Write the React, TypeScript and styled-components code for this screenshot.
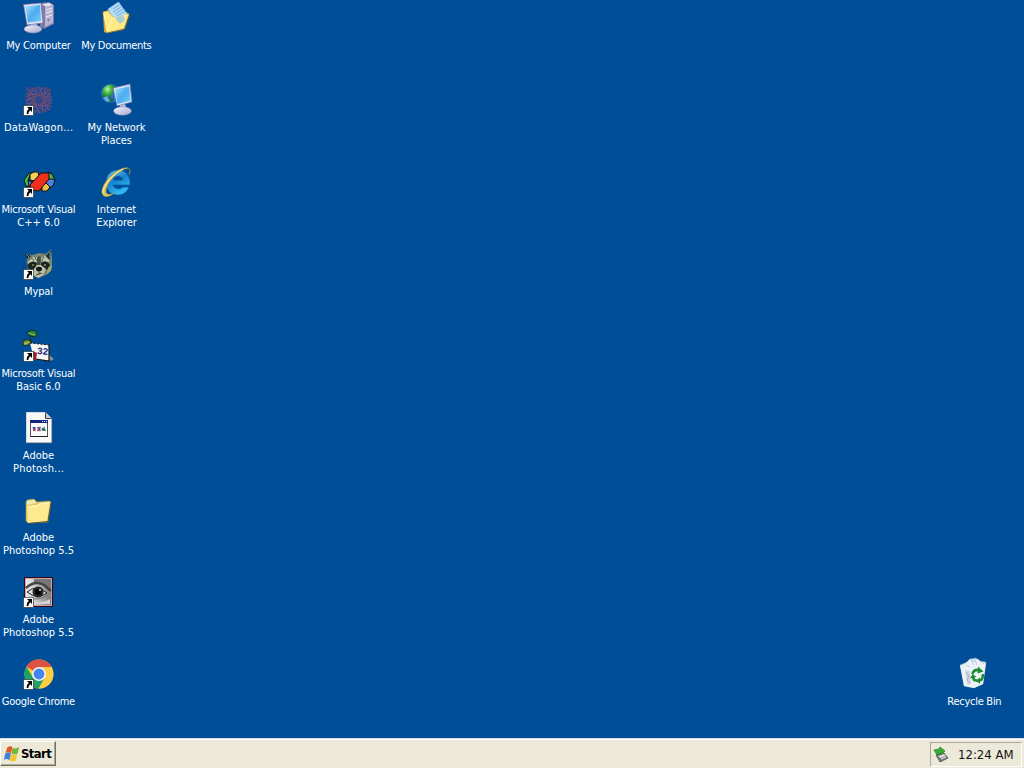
import React from "react";
import styled, { createGlobalStyle } from "styled-components";

const GlobalStyle = createGlobalStyle`
  * { box-sizing: border-box; }
  html, body { margin: 0; padding: 0; overflow: hidden; background: #004e98; }
`;

const Screen = styled.div`
  width: 1024px;
  height: 768px;
  display: flex;
  flex-direction: column;
  background: #004e98;
  font-family: Tahoma, "DejaVu Sans Condensed", "DejaVu Sans", sans-serif;
  cursor: default;
  user-select: none;
`;

const Desktop = styled.main`
  flex: 1;
  min-height: 0;
  display: flex;
  gap: 2px;
  padding-right: 12px;
`;

const IconColumn = styled.div<{ $end?: boolean }>`
  width: 76px;
  display: flex;
  flex-direction: column;
  margin-left: ${(p) => (p.$end ? "auto" : "0")};
  padding-top: ${(p) => (p.$end ? "656px" : "0")};
`;

const Shortcut = styled.div`
  height: 82px;
  flex: none;
  padding-top: 2px;
  display: flex;
  flex-direction: column;
  align-items: center;
`;

const Glyph = styled.svg`
  width: 32px;
  height: 32px;
  flex: none;
  overflow: visible;
  margin-bottom: 5px;
`;

const LabelLine = styled.span<{ $tracking: number }>`
  font-size: 11px;
  line-height: 13px;
  height: 13px;
  color: #fff;
  white-space: nowrap;
  letter-spacing: ${(p) => p.$tracking}px;
  margin-right: ${(p) => -p.$tracking - 1}px;
`;

const Taskbar = styled.footer`
  height: 30px;
  flex: none;
  display: flex;
  align-items: flex-start;
  justify-content: space-between;
  padding: 2px 2px 0 0;
  background: #ece9d8;
  border-top: 1px solid #d8dfe4;
  box-shadow: inset 0 1px 0 #fff;
`;

const StartButton = styled.button`
  width: 56px;
  height: 25px;
  display: flex;
  align-items: center;
  gap: 1px;
  padding: 0 0 0 3px;
  background: #ece9d8;
  border: 1px solid;
  border-color: #fff #716f64 #716f64 #fff;
  box-shadow: inset -1px -1px 0 #aca899;
  font: bold 13px/16px Tahoma, "DejaVu Sans Condensed", sans-serif;
  letter-spacing: -0.6px;
  color: #000;
`;

const Tray = styled.div`
  width: 92px;
  height: 25px;
  display: flex;
  align-items: center;
  padding-left: 2px;
  border: 1px solid;
  border-color: #aca899 #fff #fff #aca899;
  margin-top: 1px;
`;

const Clock = styled.span`
  margin-left: 9px;
  font-size: 13px;
  line-height: 15px;
  color: #111;
  white-space: nowrap;
`;

const SmallGlyph = styled.svg`
  width: 16px;
  height: 16px;
  flex: none;
  overflow: visible;
`;

const Numerals = styled.text`
  font: bold 9.5px "Liberation Sans", sans-serif;
  fill: #28267b;
`;

const ShortcutArrow = () => (
  <g>
    <rect x="1.500" y="21.500" width="10" height="10" fill="#fff" stroke="#222" strokeWidth=".6" />
    <path d="M5 23h5v5l-1.700-1.700Q6.300 27.800 6.300 30H4.600q-.4-3 2.200-5.200z" fill="#000" />
  </g>
);

const MyComputer = () => (
  <Glyph viewBox="0 0 32 32">
    <defs>
      <linearGradient id="screen" x1="0" y1="0" x2="1" y2="1">
        <stop offset="0" stopColor="#a5e4ff" /><stop offset=".5" stopColor="#4dabf0" /><stop offset="1" stopColor="#70cef8" />
      </linearGradient>
      <linearGradient id="plastic" x1="0" y1="0" x2="1" y2="1">
        <stop offset="0" stopColor="#f4f5ff" /><stop offset="1" stopColor="#a6a5cc" />
      </linearGradient>
    </defs>
    <path d="M19 1l8-1 5 3v19l-10 5-4-3z" fill="#7f7ba8" />
    <path d="M20 2l7-1 4 2-7 2z" fill="#e2e3f3" />
    <path d="M23 5l8-2v18l-8 4z" fill="#b6b4d3" />
    <path d="M24 8l6-2M24 11l6-2M24 15l6-2" stroke="#ededfa" strokeWidth="1" />
    <circle cx="26.500" cy="18" r="1" fill="#6b679e" />
    <path d="M1.500 2.500L19 1l2 20-16 2z" fill="#dde0ef" stroke="#746ea5" strokeWidth=".7" />
    <path d="M3.500 4.500L18 3l1 16-13 1.500z" fill="url(#screen)" />
    <path d="M9 22h6l1 4H9z" fill="#b2afd3" />
    <ellipse cx="11" cy="27" rx="9" ry="4" fill="url(#plastic)" stroke="#8580ab" strokeWidth=".6" />
  </Glyph>
);

const MyDocuments = () => (
  <Glyph viewBox="0 0 32 32">
    <path d="M3 10l6-2 2 3 15-1 3 2-6 16-16 3-3-1z" fill="#d9a931" />
    <path d="M8 7L18.500 0l9.500 13-12 10z" fill="#b5dcf6" stroke="#8bb9dc" strokeWidth=".7" />
    <path d="M13 7l6-4M13 10l8-5M15 12l8-5M17 14l8-5" stroke="#74abd8" />
    <path d="M3 10l5-1 3 4 4 3 14-4-5 15-17 4z" fill="#ffeb83" stroke="#dbab35" strokeWidth=".6" />
    <path d="M4 12l3 17 5-12 15-4" fill="none" stroke="#fff8ba" />
    <path d="M15 16l5 6 5-4-2-5z" fill="#a9cdd2" />
    <path d="M7 31l18-4 5-14" fill="none" stroke="#5d5b35" strokeWidth=".8" />
  </Glyph>
);

const DataWagon = () => (
  <Glyph viewBox="0 0 32 32">
    <path d="M4 3h25v23l-8 3H7L3 18z" fill="#5b4478" opacity=".45" />
    <g fill="none" strokeWidth=".9" opacity=".8">
      {[0, 30, 60, 90, 120, 150, 180, 210, 240, 270, 300, 330].map((a) => (
        <g key={a} transform={`rotate(${a} 17 16)`}>
          <path d="M16 10l3-3-3-3M17 10l-4-3 1-4" stroke={a % 60 ? "#765a9c" : "#944a61"} />
          <circle cx="17" cy="3" r=".8" fill="#9a526d" stroke="none" />
        </g>
      ))}
      <circle cx="17" cy="16" r="5" stroke="#a04e5c" strokeWidth="2.500" strokeDasharray="1.500 1" />
      <path d="M4 5l6 3-3 4 5-3M29 5l-6 4 5 3M4 17l5-2-3-4M28 26l-5-4 6-3M29 14l-5 1" stroke="#8f4a66" />
    </g>
    <ShortcutArrow />
  </Glyph>
);

const NetworkPlaces = () => (
  <Glyph viewBox="0 0 32 32">
    <defs>
      <radialGradient id="earth" cx=".35" cy=".25"><stop stopColor="#b9f99a" /><stop offset=".55" stopColor="#3caa3e" /><stop offset="1" stopColor="#1b6c54" /></radialGradient>
    </defs>
    <circle cx="10.500" cy="9.500" r="9.500" fill="#2770d1" />
    <path d="M2 6Q7-1 14 1l4 4-5 4-3 4 4 2-2 4Q5 18 2 12z" fill="url(#earth)" />
    <path d="M3 14l4-2 3 5-3 1z" fill="#6aa7ee" />
    <path d="M13 4l17-4 2 18-15 4z" fill="#d8e3f4" stroke="#6672a4" strokeWidth=".7" />
    <path d="M15 5.500l14-3 1.500 14-13 3.500z" fill="url(#screen)" />
    <path d="M20 21l5-1 2 5h-7z" fill="#b9b6d7" />
    <ellipse cx="22.500" cy="27" rx="9" ry="4.200" fill="url(#plastic)" stroke="#8783af" strokeWidth=".5" />
  </Glyph>
);

const VisualCpp = () => (
  <Glyph viewBox="0 0 32 32">
    <g stroke="#101010" strokeWidth="1" strokeLinejoin="round">
      <path d="M2 14l5-7h2l-3 7 2 6H4z" fill="#3fc24d" />
      <path d="M8 8l4-2h4l1 4-4 5-5-1z" fill="#f5ce58" />
      <path d="M6 14l4 2v4H7z" fill="#447bd3" />
      <path d="M26 6l4 2 3 6-3 1-5-4z" fill="#51b54b" />
      <path d="M25 13l5 0 3 1-2 6-4 2-4-3z" fill="#4a82dd" />
      <path d="M20 20l4-3 4 4-3 4h-5z" fill="#f1c43f" />
      <path d="M8 19L19 7h8v6L17 25l-8-1z" fill="#ef301b" />
    </g>
    <ShortcutArrow />
  </Glyph>
);

const InternetExplorer = () => (
  <Glyph viewBox="0 0 32 32">
    <defs><linearGradient id="ieBlue" x1="0" y1="0" x2=".5" y2="1"><stop stopColor="#74cdf5" /><stop offset=".5" stopColor="#1683d2" /><stop offset="1" stopColor="#32bdf0" /></linearGradient></defs>
    <path fillRule="evenodd" d="M6 17C6 9 11 4 18 4s12 5 12 13v2H13c1 4 7 5 10 2h6c-2 5-6 8-11 8C11 29 6 24 6 17zm7-3h10c-1-5-9-5-10 0z" fill="url(#ieBlue)" stroke="#075da8" strokeWidth=".7" />
    <path d="M29 9C34-1 22 0 12 9 3 17-1 27 4 30c3 2 8-1 10-3-5 2-8 2-8-2C6 18 15 7 25 3c5-2 6 0 4 6z" fill="#e2c75b" stroke="#9c914c" strokeWidth=".5" />
    <path d="M3 27C2 20 14 7 23 3" fill="none" stroke="#fff19a" strokeWidth="1" />
  </Glyph>
);

const Mypal = () => (
  <Glyph viewBox="0 0 32 32">
    <path d="M4 6l6 1 7-2 7 1 5-5 1 10v8l-4 7-9 4-8-3-4-9z" fill="#7d8672" />
    <path d="M3 5l6 3-4 5zM24 8l5-6-1 10z" fill="#172c31" />
    <path d="M4 6l3 3-2 3M28 4v6" stroke="#6f9a9f" fill="none" />
    <path d="M6 14l6-6 5 3 6-3 5 5-3 1-6-2-3 5-4-4-6 3z" fill="#c0c7ac" />
    <path d="M12 8l3 5M18 8v5M22 9l-2 3M9 10l3 2" stroke="#515c4b" />
    <path d="M5 17q5-6 10-2l-2 7-5 1zM19 15q6-4 9 2l-3 5-6-2z" fill="#182522" />
    <path d="M15 10l2-2 2 2-1 9h-3z" fill="#3f5048" />
    <path d="M11 22l4-5h4l5 4-3 6-5 3-6-4z" fill="#bcc1a5" />
    <ellipse cx="17" cy="21" rx="3" ry="2.300" fill="#101818" />
    <path d="M17 23v3l-3 1m3-1l3-1" fill="none" stroke="#38443b" />
    <circle cx="11" cy="17" r="1" fill="#a88350" /><circle cx="23" cy="17" r="1" fill="#b49562" />
    <path d="M26 20l4-3-1 6-4 3z" fill="#a2a66f" />
    <ShortcutArrow />
  </Glyph>
);

const VisualBasic = () => (
  <Glyph viewBox="0 0 32 32">
    <path d="M5 3q4-5 10-1 1 3-2 5-5 0-8-4z" fill="#268445" stroke="#102c19" />
    <path d="M6 3l7 2" stroke="#a8bf49" /><path d="M7 5q2 5 3 8" fill="none" stroke="#1b301d" />
    <path d="M1 11q4-3 8 0-2 5-6 5-3-1-2-5z" fill="#77963e" stroke="#132b15" />
    <path d="M2 14l6-2" stroke="#c6c65a" />
    <path d="M25 23l7 6-4 2z" fill="#889099" />
    <path d="M8 13l19 2v16l-15-2z" fill="#f5f5f2" />
    <path d="M8 13l19 2" stroke="#15151b" strokeDasharray="2 1.500" />
    <path d="M27 15v16l-13-2" fill="none" stroke="#15151b" strokeWidth="1.200" />
    <path d="M11 21l4 2-1 7h-4z" fill="#96202f" />
    <Numerals x="15.500" y="24.500" transform="rotate(5 20 20)">32</Numerals>
    <ShortcutArrow />
  </Glyph>
);

const PhotoshopDocument = () => (
  <Glyph viewBox="0 0 32 32">
    <path d="M4.500.500h19l6 6v24h-25z" fill="#f8f8f8" stroke="#d5d8df" />
    <path d="M23.500.500v6h6" fill="#c7cbd1" stroke="#3c3e46" />
    <path d="M30 7v24H5" fill="none" stroke="#576071" strokeWidth=".6" />
    <rect x="8.500" y="8.500" width="17" height="16" fill="#fafafa" stroke="#555" />
    <rect x="8" y="8" width="18" height="3" fill="#17227e" />
    <path d="M20 9.500h1m1 0h1m1 0h1" stroke="#fff" />
    <path d="M10.500 15h3v4h-2z" fill="#27519d" />
    <circle cx="12" cy="18" r="1.200" fill="#ce4845" />
    <path d="M15.500 15l3 4m0-4l-3 4" stroke="#7b3f6f" strokeWidth="1.400" />
    <path d="M20 19l2-5 2 5z" fill="#27856a" /><circle cx="20.500" cy="17" r="1" fill="#27519d" />
    <path d="M9 24.500h17" stroke="#222" />
  </Glyph>
);

const Folder = () => (
  <Glyph viewBox="0 0 32 32">
    <path d="M4 8l1-2 7-1 3 3 12-1 2 1-3 20-20 1-2-2z" fill="#e9ca64" stroke="#b99848" strokeWidth=".6" />
    <path d="M5 7l7-1 2 3-9 2z" fill="#e5f0b8" />
    <path d="M5 12l10-1 3-2 10-1-3 19-19 2z" fill="#fdea90" />
    <path d="M6 13l9-1 3-2 9-1" fill="none" stroke="#fffbd2" />
    <path d="M29 9l-3 18.500-20 2" fill="none" stroke="#4d482f" strokeWidth=".9" />
  </Glyph>
);

const PhotoshopEye = () => (
  <Glyph viewBox="0 0 32 32">
    <defs><linearGradient id="eyeSkin"><stop stopColor="#f0f0f0" /><stop offset=".5" stopColor="#bbb" /><stop offset="1" stopColor="#777" /></linearGradient></defs>
    <rect x="2" y="1" width="29" height="30" fill="#2b0a16" />
    <rect x="3.500" y="2.500" width="26" height="27" fill="url(#eyeSkin)" stroke="#dba0a4" />
    <path d="M12 3h17v11L20 8l-8-1z" fill="#777" />
    <path d="M4 12q9-8 18-3l7 6" fill="none" stroke="#444" strokeWidth="2.500" />
    <path d="M5 16q9-8 20 1-10 7-20-1z" fill="#ddd" stroke="#222" />
    <circle cx="16" cy="16" r="5.500" fill="#242729" /><circle cx="16" cy="16" r="3" fill="#020202" />
    <circle cx="18" cy="14" r="1" fill="#dbe4e4" />
    <path d="M9 22q8 3 17-3" fill="none" stroke="#777" strokeWidth="1.200" />
    <path d="M12 28h16v-5q-7 4-16 3z" fill="#d4d4d4" />
    <ShortcutArrow />
  </Glyph>
);

const Chrome = () => (
  <Glyph viewBox="0 0 32 32">
    <circle cx="17" cy="16" r="14.500" fill="#fc3" />
    <path d="M17 16L4.400 8.800A14.500 14.500 0 0 1 29.600 9H17z" fill="#de5145" />
    <path d="M4.400 8.800A14.500 14.500 0 0 0 16.800 30.500L23 19.500 11 19.500z" fill="#1da463" />
    <path d="M17 9h12.600A14.500 14.500 0 0 1 16.800 30.500l6.200-11z" fill="#ffcd43" />
    <circle cx="17" cy="16" r="7" fill="#f3f4f3" /><circle cx="17" cy="16" r="5.400" fill="#4285ef" />
    <ShortcutArrow />
  </Glyph>
);

const RecycleBin = () => (
  <Glyph viewBox="0 0 32 32">
    <path d="M2 7l7-3 3-3 6-1 4 3 6 1-3 22-9 4-10-2z" fill="#cbe3ee" stroke="#758cb0" strokeWidth=".5" />
    <path d="M5 8l7-7 3 4 5-4 6 7-6 4-8 1z" fill="#eef3fb" />
    <path d="M13 2l3 5M17 2l2 5M8 7l4 2" stroke="#b7c9de" />
    <path d="M2 7q12 6 26-2l-3 21-9 4-10-2z" fill="#edf5f5" opacity=".9" />
    <path d="M7 12l2 14 4 1-1-14z" fill="#d2d5e6" /><path d="M8 14l3 4-2 4 3 3" stroke="#b9a8c6" fill="none" />
    <g fill="none" stroke="#218a35" strokeWidth="2.600">
      <path d="M14.500 16q1-5 7-4M25 16q0 6-4 7M20 23l-4-1-1-3" />
    </g>
    <path d="M20 8.500l5.500 5-6 2zM22 19.500v6.500l-4-3.500zM12 20.500l2.500-4.500 4 3z" fill="#218a35" />
  </Glyph>
);

type Line = [text: string, tracking: number];
type Item = { icon: React.ComponentType; lines: Line[] };

const firstColumn: Item[] = [
  { icon: MyComputer, lines: [["My Computer", -0.2]] },
  { icon: DataWagon, lines: [["DataWagon...", 0.22]] },
  { icon: VisualCpp, lines: [["Microsoft Visual", -0.23], ["C++ 6.0", 0]] },
  { icon: Mypal, lines: [["Mypal", -0.1]] },
  { icon: VisualBasic, lines: [["Microsoft Visual", -0.23], ["Basic 6.0", -0.1]] },
  { icon: PhotoshopDocument, lines: [["Adobe", 0], ["Photosh...", 0.2]] },
  { icon: Folder, lines: [["Adobe", 0], ["Photoshop 5.5", 0]] },
  { icon: PhotoshopEye, lines: [["Adobe", 0], ["Photoshop 5.5", 0]] },
  { icon: Chrome, lines: [["Google Chrome", -0.3]] },
];

const secondColumn: Item[] = [
  { icon: MyDocuments, lines: [["My Documents", -0.33]] },
  { icon: NetworkPlaces, lines: [["My Network", -0.1], ["Places", -0.1]] },
  { icon: InternetExplorer, lines: [["Internet", 0], ["Explorer", -0.1]] },
];

const DesktopItem = ({ icon: Icon, lines }: Item) => (
  <Shortcut>
    <Icon />
    {lines.map(([text, tracking]) => (
      <LabelLine key={text} $tracking={tracking}>{text}</LabelLine>
    ))}
  </Shortcut>
);

const WindowsFlag = () => (
  <SmallGlyph viewBox="0 0 16 16">
    <path d="M3.200 1.500q3-2.500 5.300-.3L7 7.300Q4 5.300 1.500 7z" fill="#e4582b" />
    <path d="M8.800 1.800q3 1.500 6.400-.7l-1.700 6.600q-3 1.400-6-.2z" fill="#73b734" />
    <path d="M1.300 7.500q3-2 5.600.2l-1.500 6.500q-3-2.400-5.600-.2z" fill="#437fd9" />
    <path d="M7.200 8q3 1.800 6.200.2l-1.700 6.600q-3 1.400-6-.4z" fill="#f4c52c" />
  </SmallGlyph>
);

const SafelyRemove = () => (
  <SmallGlyph viewBox="0 0 16 16">
    <path d="M3 8l8-2 4 5-8 4z" fill="#777b78" stroke="#41454a" strokeWidth=".7" />
    <path d="M5 9l6-2 2 2-6 2z" fill="#d9dfd8" />
    <path d="M8 12l5-2" stroke="#ecf5e6" />
    <path d="M1 3l5-1 1-2 5 4-4 4V6L4 8z" fill="#3aaa31" stroke="#206c22" strokeWidth=".6" />
  </SmallGlyph>
);

export default function App() {
  return (
    <>
      <GlobalStyle />
      <Screen>
        <Desktop>
          <IconColumn>{firstColumn.map((item, i) => <DesktopItem key={i} {...item} />)}</IconColumn>
          <IconColumn>{secondColumn.map((item, i) => <DesktopItem key={i} {...item} />)}</IconColumn>
          <IconColumn $end>
            <DesktopItem icon={RecycleBin} lines={[["Recycle Bin", -0.27]]} />
          </IconColumn>
        </Desktop>
        <Taskbar>
          <StartButton><WindowsFlag />Start</StartButton>
          <Tray><SafelyRemove /><Clock>12:24 AM</Clock></Tray>
        </Taskbar>
      </Screen>
    </>
  );
}
